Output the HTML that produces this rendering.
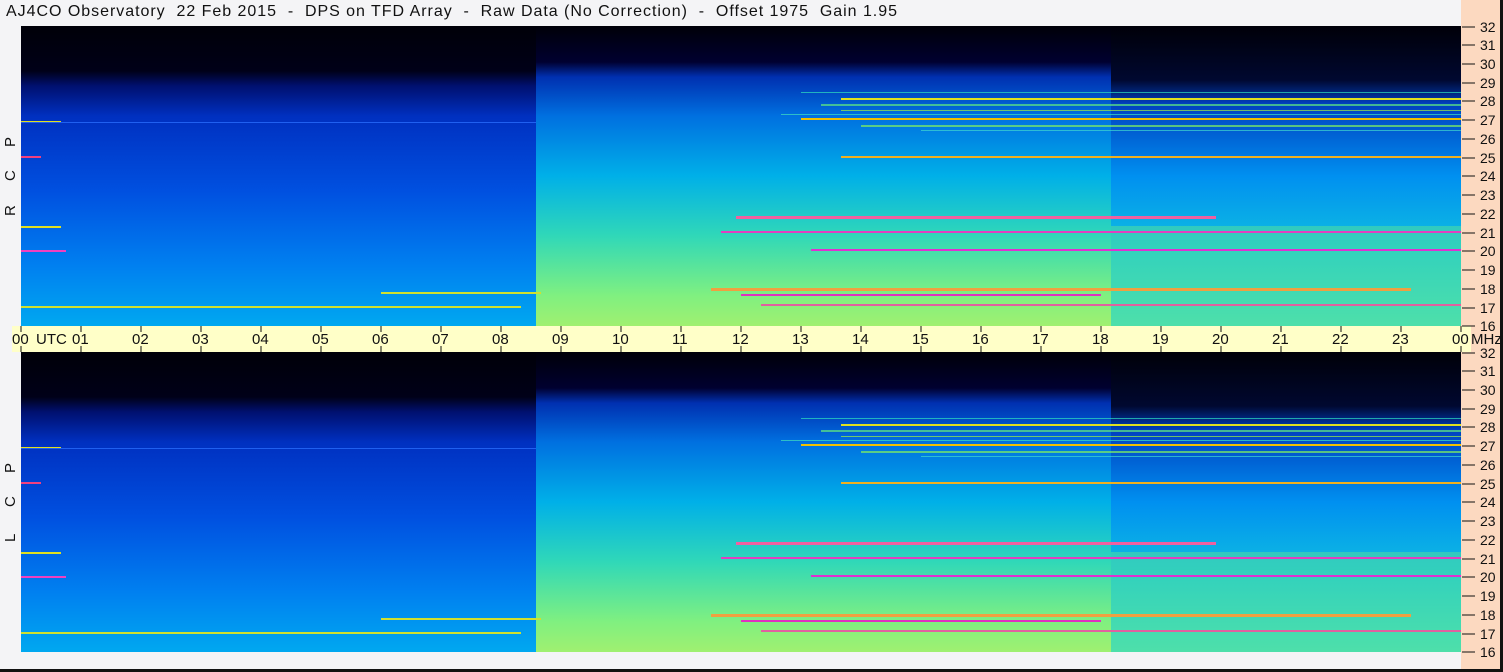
<!DOCTYPE html>
<html><head><meta charset="utf-8"><style>
body{margin:0;width:1503px;height:672px;background:#f4f4f6;position:relative;overflow:hidden;font-family:"Liberation Sans",sans-serif}
.t{position:absolute;left:6px;top:3px;font-size:16px;color:#111;white-space:pre;letter-spacing:0.97px}
.peach{position:absolute;left:1461px;top:0;width:42px;height:672px;background:#fcd9c0}
.bb{position:absolute;left:0;top:669px;width:1503px;height:3px;background:#111}
.rb{position:absolute;left:1500px;top:0;width:3px;height:672px;background:#111}
</style></head><body>
<div class="peach"></div>
<div class="t">AJ4CO Observatory  22 Feb 2015  -  DPS on TFD Array  -  Raw Data (No Correction)  -  Offset 1975  Gain 1.95</div>
<svg width="1503" height="672" style="position:absolute;left:0;top:0">
<defs>
<linearGradient id="gL" x1="0" y1="0" x2="0" y2="1">
<stop offset="0" stop-color="#000008"/><stop offset="0.15" stop-color="#000018"/><stop offset="0.2" stop-color="#001070"/><stop offset="0.3" stop-color="#0030c0"/><stop offset="0.55" stop-color="#0050e0"/><stop offset="0.8" stop-color="#0080f0"/><stop offset="1" stop-color="#00a8f0"/></linearGradient>
<linearGradient id="gM" x1="0" y1="0" x2="0" y2="1">
<stop offset="0" stop-color="#000008"/><stop offset="0.12" stop-color="#000030"/><stop offset="0.17" stop-color="#0030b0"/><stop offset="0.3" stop-color="#0070e0"/><stop offset="0.5" stop-color="#00b0e8"/><stop offset="0.7" stop-color="#30d8b8"/><stop offset="0.9" stop-color="#80f080"/><stop offset="1" stop-color="#a0f070"/></linearGradient>
<linearGradient id="gR" x1="0" y1="0" x2="0" y2="1">
<stop offset="0" stop-color="#000008"/><stop offset="0.18" stop-color="#000830"/><stop offset="0.26" stop-color="#0040c0"/><stop offset="0.5" stop-color="#0090f0"/><stop offset="0.75" stop-color="#10c0e0"/><stop offset="1" stop-color="#40d8c0"/></linearGradient>
<g id="spec">
<rect x="0" y="0" width="515" height="300" fill="url(#gL)"/>
<rect x="515" y="0" width="575" height="300" fill="url(#gM)"/>
<rect x="1090" y="0" width="350" height="300" fill="url(#gR)"/>
<rect x="1090" y="200" width="350" height="100" fill="#60e890" opacity="0.45"/>
<g opacity="0.7">
<rect x="780" y="66" width="660" height="1" fill="#30e0c0"/>
<rect x="800" y="78" width="640" height="2" fill="#60e880"/>
<rect x="820" y="84" width="620" height="1" fill="#a0f040"/>
<rect x="760" y="88" width="680" height="1" fill="#40e0c0"/>
<rect x="840" y="99" width="600" height="2" fill="#80f060"/>
<rect x="900" y="104" width="540" height="1" fill="#40d8d0"/>
</g>
<rect x="820" y="72" width="620" height="2" fill="#e0e020"/>
<rect x="780" y="92" width="660" height="2" fill="#f0c000"/>
<rect x="820" y="130" width="620" height="2" fill="#f0b020"/>
<rect x="715" y="190" width="480" height="3" fill="#f060a0"/>
<rect x="700" y="205" width="740" height="2" fill="#e040c0"/>
<rect x="790" y="223" width="650" height="2" fill="#e030d0"/>
<rect x="690" y="262" width="700" height="3" fill="#f0a040"/>
<rect x="720" y="268" width="360" height="2" fill="#e030c0"/>
<rect x="740" y="278" width="700" height="2" fill="#e060a0"/>
<rect x="0" y="95" width="40" height="2" fill="#e0e020"/>
<rect x="0" y="130" width="20" height="2" fill="#f04080"/>
<rect x="0" y="224" width="45" height="2" fill="#f040c0"/>
<rect x="0" y="200" width="40" height="2" fill="#e0e020"/>
<rect x="0" y="280" width="500" height="2" fill="#d0e030"/>
<rect x="360" y="266" width="160" height="2" fill="#d0e030"/>
<rect x="0" y="96" width="515" height="1" fill="#2060f0"/>
</g>
</defs>
<use href="#spec" x="21" y="26"/>
<use href="#spec" x="21" y="352"/>
<rect x="12" y="326" width="1459" height="26" fill="#ffffc8"/>
<g stroke="#111" stroke-width="1">
<path d="M21 326v6M81 326v6M141 326v6M201 326v6M261 326v6M321 326v6M381 326v6M441 326v6M501 326v6M561 326v6M621 326v6M681 326v6M741 326v6M801 326v6M861 326v6M921 326v6M981 326v6M1041 326v6M1101 326v6M1161 326v6M1221 326v6M1281 326v6M1341 326v6M1401 326v6M1461 326v6"/>
<path d="M21 346v6M81 346v6M141 346v6M201 346v6M261 346v6M321 346v6M381 346v6M441 346v6M501 346v6M561 346v6M621 346v6M681 346v6M741 346v6M801 346v6M861 346v6M921 346v6M981 346v6M1041 346v6M1101 346v6M1161 346v6M1221 346v6M1281 346v6M1341 346v6M1401 346v6M1461 346v6"/>
</g>
<g font-family="Liberation Sans" font-size="15" fill="#111">
<text x="12" y="344">00</text><text x="36" y="344">UTC</text>
<text x="72" y="344">01</text><text x="132" y="344">02</text><text x="192" y="344">03</text><text x="252" y="344">04</text><text x="312" y="344">05</text><text x="372" y="344">06</text><text x="432" y="344">07</text><text x="492" y="344">08</text><text x="552" y="344">09</text><text x="612" y="344">10</text><text x="672" y="344">11</text><text x="732" y="344">12</text><text x="792" y="344">13</text><text x="852" y="344">14</text><text x="912" y="344">15</text><text x="972" y="344">16</text><text x="1032" y="344">17</text><text x="1092" y="344">18</text><text x="1152" y="344">19</text><text x="1212" y="344">20</text><text x="1272" y="344">21</text><text x="1332" y="344">22</text><text x="1392" y="344">23</text><text x="1452" y="344">00</text><text x="1471" y="344">MHz</text>
</g>
<g id="ax" font-family="Liberation Sans" font-size="14" fill="#111">
<g stroke="#111"><path d="M1462 27h13M1462 45h13M1462 64h13M1462 83h13M1462 101h13M1462 120h13M1462 139h13M1462 158h13M1462 176h13M1462 195h13M1462 214h13M1462 233h13M1462 251h13M1462 270h13M1462 289h13M1462 308h13M1462 326h13"/></g>
<text x="1480" y="32">32</text><text x="1480" y="50">31</text><text x="1480" y="69">30</text><text x="1480" y="88">29</text><text x="1480" y="106">28</text><text x="1480" y="125">27</text><text x="1480" y="144">26</text><text x="1480" y="163">25</text><text x="1480" y="181">24</text><text x="1480" y="200">23</text><text x="1480" y="219">22</text><text x="1480" y="238">21</text><text x="1480" y="256">20</text><text x="1480" y="275">19</text><text x="1480" y="294">18</text><text x="1480" y="313">17</text><text x="1480" y="331">16</text>
</g>
<use href="#ax" x="0" y="326"/>
<g font-family="Liberation Sans" font-size="15" fill="#111">
<text transform="translate(15,147) rotate(-90)">P</text>
<text transform="translate(15,181) rotate(-90)">C</text>
<text transform="translate(15,216) rotate(-90)">R</text>
<text transform="translate(15,473) rotate(-90)">P</text>
<text transform="translate(15,507) rotate(-90)">C</text>
<text transform="translate(15,542) rotate(-90)">L</text>
</g>
</svg>
<div class="bb"></div><div class="rb"></div>
</body></html>
